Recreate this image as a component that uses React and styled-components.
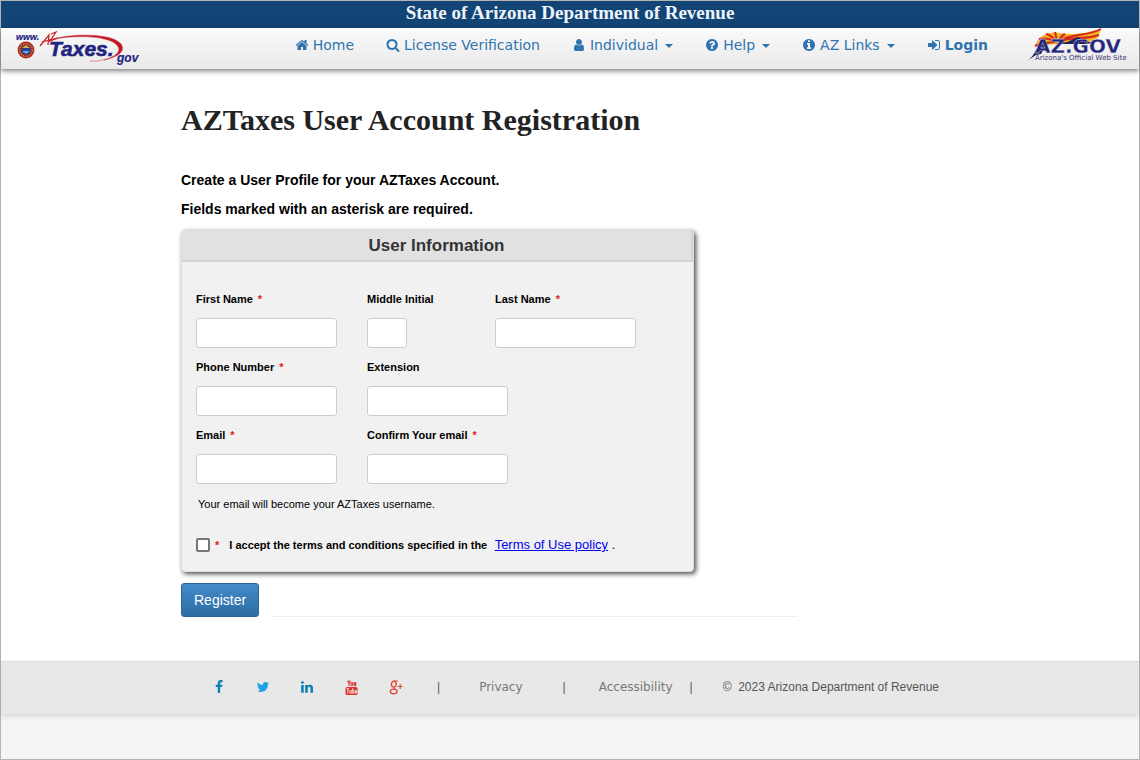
import React from "react";
import styled, { createGlobalStyle } from "styled-components";

const SANS = '"Liberation Sans", Arial, sans-serif';
const WIDE = '"DejaVu Sans", Verdana, sans-serif';
const SERIF = '"Liberation Serif", "Times New Roman", serif';

const GlobalStyle = createGlobalStyle`
  *, *::before, *::after { box-sizing: border-box; }
  body { margin: 0; background: #f4f4f4; font-family: ${SANS}; color: #000; }
`;

const Page = styled.div`
  display: flex;
  flex-direction: column;
  min-height: 100vh;
  border: 1px solid #b4b4b2;
  background: #f4f4f4;
`;

const Banner = styled.div`
  background: #124475;
  color: #edf4fb;
  font: bold 19px/23px ${SERIF};
  padding-bottom: 4px;
  text-align: center;
`;

const NavBar = styled.header`
  display: flex;
  height: 41px;
  background: linear-gradient(#fafafa, #e9e9e9);
  box-shadow: 0 2px 5px rgba(0, 0, 0, 0.5);
  padding: 0 11px 0 13px;
  z-index: 1;
`;

const NavList = styled.nav`
  display: flex;
  gap: 32px;
  margin: 0 39px 0 auto;
`;

const NavLink = styled.a`
  display: flex;
  align-items: center;
  gap: 4px;
  height: 34px;
  color: #2f74ae;
  font: ${(p) => (p.$strong ? "bold" : "normal")} 14px/20px ${WIDE};
  text-decoration: none;
  white-space: nowrap;
`;

const Caret = styled.span`
  margin: 2px 0 0 3px;
  border: 4px solid transparent;
  border-top-color: currentColor;
  border-bottom: 0;
`;

const Main = styled.main`
  background: #fff;
  padding: 31px 180px 44px;
  flex: none;
`;

const Title = styled.h1`
  margin: 0 0 32px;
  color: #222;
  font: bold 30px/40px ${SERIF};
`;

const Intro = styled.p`
  margin: 0 0 13px;
  font: bold 14px/16px ${SANS};
`;

const Panel = styled.section`
  max-width: 513px;
  background: #f1f1f1;
  border: 1px solid #ddd;
  border-radius: 4px;
  box-shadow: 2px 2px 5px rgba(0, 0, 0, 0.7);
  margin-bottom: 11px;
`;

const PanelTitle = styled.h2`
  margin: 0;
  border: 1px solid #d3d3d3;
  border-width: 0 2px 2px 0;
  background: #e1e1e1;
  color: #333;
  font: bold 17px/29px ${SANS};
  text-align: center;
`;

const PanelBody = styled.div`
  padding: 30px 14px 17px;
`;

const FieldRow = styled.div`
  display: grid;
  grid-template-columns: ${(p) => p.$columns};
  column-gap: 30px;
  margin-bottom: 12px;
`;

const Field = styled.label`
  display: flex;
  flex-direction: column;
  gap: 12px;
  font: bold 11px/14px ${SANS};
`;

const Input = styled.input`
  width: ${(p) => (p.$short ? "40px" : "141px")};
  height: 30px;
  border: 1px solid #ccc;
  border-radius: 3px;
  background: #fff;
  padding: 4px 6px;
  font: 13px/20px ${SANS};
`;

const Star = styled.span`
  color: #d22;
  margin-left: 5px;
`;

const Hint = styled.p`
  margin: 0 0 24px 2px;
  font: 11px/16px ${SANS};
`;

const Terms = styled.div`
  display: flex;
  align-items: center;
  font: bold 11px/18px ${SANS};
`;

const CheckBox = styled.input`
  appearance: none;
  width: 14px;
  height: 14px;
  margin: 0;
  border: 2px solid #777;
  border-radius: 2px;
  background: #fff;
  &:checked { background: #2f74ae; }
`;

const TermsText = styled.span`
  margin-left: 10px;
  font: 13px/18px ${SANS};
`;

const TermsLabel = styled.label`
  font: bold 11px/18px ${SANS};
  margin-right: 4px;
`;

const TermsLink = styled.a`
  color: #00e;
`;

const Actions = styled.div`
  display: flex;
  align-items: flex-end;
  gap: 12px;
  max-width: 617px;
`;

const Rule = styled.div`
  flex: 1;
  height: 1px;
  background: #eee;
`;

const Button = styled.button`
  height: 34px;
  padding: 0 12px;
  border: 1px solid #2b669a;
  border-radius: 3px;
  background: linear-gradient(#428bca, #2d6ca2);
  color: #fff;
  font: 14px/20px ${SANS};
`;

const Footer = styled.footer`
  display: flex;
  align-items: center;
  height: 53px;
  border-top: 1px solid #ddd;
  background: #e8e8e8;
  box-shadow: 0 2px 5px rgba(0, 0, 0, 0.12);
  color: #555;
  font: 12px/16px ${SANS};
  padding: 0 0 2px 211px;
`;

const Social = styled.div`
  display: flex;
  gap: 30px;
  margin-right: 33px;
`;

const SocialLink = styled.a`
  display: flex;
  color: ${(p) => p.$color};
`;

const FooterLink = styled.a`
  color: #777;
  font: 12px/16px ${WIDE};
  text-decoration: none;
  margin: 0 ${(p) => p.$right}px 0 ${(p) => p.$left}px;
`;

const Copyright = styled.span`
  margin-left: 30px;
  white-space: pre;
`;

const disc =
  "M1664 896q0 209-103 385.5t-279.5 279.5-385.5 103-385.5-103-279.5-279.5-103-385.5 103-385.5 279.5-279.5 385.5-103 385.5 103 279.5 279.5 103 385.5z";

const paths = {
  home: "M1472 992v480q0 26-19 45t-45 19h-384v-384h-256v384h-384q-26 0-45-19t-19-45v-480q0-1 .5-3t.5-3l575-474 575 474q1 2 1 6zm223-69l-62 74q-8 9-21 11h-3q-13 0-21-7l-692-577-692 577q-12 8-24 7-13-2-21-11l-62-74q-8-10-7-23.5t11-21.5l719-599q32-26 76-26t76 26l244 204v-195q0-14 9-23t23-9h192q14 0 23 9t9 23v408l219 182q10 8 11 21.5t-7 23.5z",
  search: "M1216 832q0-185-131.5-316.5t-316.5-131.5-316.5 131.5-131.5 316.5 131.5 316.5 316.5 131.5 316.5-131.5 131.5-316.5zm512 832q0 52-38 90t-90 38q-54 0-90-38l-343-342q-179 124-399 124-143 0-273.5-55.5t-225-150-150-225-55.5-273.5 55.5-273.5 150-225 225-150 273.5-55.5 273.5 55.5 225 150 150 225 55.5 273.5q0 220-124 399l343 343q37 37 37 90z",
  user: "M1536 1399q0 109-62.5 187t-150.5 78h-854q-88 0-150.5-78t-62.5-187q0-85 8.5-160.5t31.5-152 58.5-131 94-89 134.5-34.5q131 128 313 128t313-128q76 0 134.5 34.5t94 89 58.5 131 31.5 152 8.5 160.5zm-256-887q0 159-112.5 271.5t-271.5 112.5-271.5-112.5-112.5-271.5 112.5-271.5 271.5-112.5 271.5 112.5 112.5 271.5z",
  help: "M1024 1376v-192q0-14-9-23t-23-9h-192q-14 0-23 9t-9 23v192q0 14 9 23t23 9h192q14 0 23-9t9-23zm256-672q0-88-55.5-163t-138.5-116-170-41q-243 0-371 213-15 24 8 42l132 100q7 6 19 6 16 0 25-12 53-68 86-92 34-24 86-24 48 0 85.5 26t37.5 59q0 38-20 61t-68 45q-63 28-115.5 86.5t-52.5 125.5v36q0 14 9 23t23 9h192q14 0 23-9t9-23q0-19 21.5-49.5t54.5-49.5q32-18 49-28.5t46-35 44.5-48 28-60.5 12.5-81z" + disc,
  info: "M1152 1376v-160q0-14-9-23t-23-9h-96v-512q0-14-9-23t-23-9h-320q-14 0-23 9t-9 23v160q0 14 9 23t23 9h96v320h-96q-14 0-23 9t-9 23v160q0 14 9 23t23 9h448q14 0 23-9t9-23zm-128-896v-160q0-14-9-23t-23-9h-192q-14 0-23 9t-9 23v160q0 14 9 23t23 9h192q14 0 23-9t9-23z" + disc,
  login: "M1312 896q0 26-19 45l-544 544q-19 19-45 19t-45-19-19-45v-288h-448q-26 0-45-19t-19-45v-384q0-26 19-45t45-19h448v-288q0-26 19-45t45-19 45 19l544 544q19 19 19 45zm352-352v704q0 119-84.5 203.5t-203.5 84.5h-320q-13 0-22.5-9.5t-9.5-22.5q0-4-1-20t-.5-26.5 3-23.5 10-19.5 20.5-6.5h320q66 0 113-47t47-113v-704q0-66-47-113t-113-47h-312l-11.5-1-11.5-3-8-5.5-7-9-2-13.5q0-4-1-20t-.5-26.5 3-23.5 10-19.5 20.5-6.5h320q119 0 203.5 84.5t84.5 203.5z",
  facebook: "M1343 12v264h-157q-86 0-116 36t-30 108v189h293l-39 296h-254v759h-306v-759h-255v-296h255v-218q0-186 104-288.5t277-102.5q147 0 228 12z",
  twitter: "M1684 408q-67 98-162 167 1 14 1 42 0 130-38 259.5t-115.5 248.5-184.5 210.5-258 146-323 54.5q-271 0-496-145 35 4 78 4 225 0 401-138-105-2-188-64.5t-114-159.5q33 5 61 5 43 0 85-11-112-23-185.5-111.5t-73.5-205.5v-4q68 38 146 41-66-44-105-115t-39-154q0-88 44-163 121 149 294.5 238.5t371.5 99.5q-8-38-8-74 0-134 94.5-228.5t228.5-94.5q140 0 236 102 109-21 205-78-37 115-142 178 93-10 186-50z",
  linkedin: "M477 625v991h-330v-991h330zm21-306q1 73-50.5 122t-135.5 49h-2q-82 0-132-49t-50-122q0-74 51.5-122.5t134.5-48.5 133 48.5 51 122.5zm1166 729v568h-329v-530q0-105-40.5-164.5t-126.5-59.5q-63 0-105.5 34.5t-63.5 85.5q-11 30-11 81v553h-329q2-399 2-647t-1-296l-1-48h329v144h-2q20-32 41-56t56.5-52 87-43.5 114.5-15.5q171 0 275 113.5t104 332.5z",
};

const cutOut = ["help", "info", "search"];

const Icon = ({ name, size = 14 }) => (
  <svg
    width={size}
    height={size}
    viewBox="0 0 1792 1792"
    fill="currentColor"
    fillRule={cutOut.includes(name) ? "evenodd" : "nonzero"}
    aria-hidden="true"
  >
    <path d={paths[name]} />
  </svg>
);

const YouTubeIcon = () => (
  <svg width="15" height="15" viewBox="0 0 15 15" aria-hidden="true">
    <g fill="none" stroke="#d9332e" strokeWidth="1.2">
      <path d="M3.6 0.5L5 3.2V6M6.4 .5L5 3.2" />
      <ellipse cx="7.9" cy="4" rx="0.9" ry="1.5" />
      <path d="M10.2 2v3q.1.9 1.4.2M11.6 2v4" />
    </g>
    <rect x="1.5" y="7" width="12" height="8" rx="1.6" fill="#d9332e" />
    <g fill="none" stroke="#fff" strokeWidth="0.8">
      <path d="M2.5 8.6h2.6M3.8 8.6v5M5.9 10v3q.5.8 1.4 0M7.3 10v3.6M8.7 8.2v5.2M8.7 10.4q1.4-.6 1.4.6v1.6q0 1.2-1.4.4M12.7 12.4q-.2 1.2-1.3.8v-2.4q1-1 1.4 0v1h-1.4" />
    </g>
  </svg>
);

const GooglePlusIcon = () => (
  <svg width="15" height="15" viewBox="0 0 15 15" fill="none" stroke="#dd4b39" aria-hidden="true">
    <ellipse cx="4.8" cy="4.2" rx="2.4" ry="2.9" strokeWidth="1.4" />
    <path d="M9 1H5.2M5.6 7.2c-1 .8-.2 1.3.6 1.9" strokeWidth="1.2" />
    <ellipse cx="4.7" cy="11.4" rx="3.4" ry="2.3" strokeWidth="1.4" />
    <path d="M8.7 6.5h5M11.2 4v5" strokeWidth="1.2" />
  </svg>
);

const TaxesLogo = () => (
  <svg width="128" height="40" viewBox="0 0 128 40" role="img" aria-label="www.AZTaxes.gov" fontFamily="Liberation Sans, Arial" fontWeight="bold" fontStyle="italic">
    <circle cx="12" cy="22" r="8.4" fill="#a32b22" />
    <circle cx="12" cy="22" r="6.4" fill="none" stroke="#d98a3a" strokeWidth="1.4" strokeDasharray="1.2 1.2" />
    <circle cx="12" cy="22" r="5" fill="#2b3f8c" />
    <path d="M8 20l4-3 4 3z" fill="#e9a33a" />
    <path d="M8 23h8l-4 3z" fill="#6fa7d8" />
    <path d="M35 12C58 5 98 5 107 16c5 8-4 13-17 16q14-4 15-10C105 9 68 5 35 12z" fill="#c31722" stroke="#c31722" strokeWidth="0.5" />
    <path d="M76 33q8 1 16-2" fill="none" stroke="#d9747a" strokeWidth="0.8" />
    <text x="2" y="12" fontSize="9" fill="#22257f" stroke="#22257f" strokeWidth="0.2">www.</text>
    <path d="M26 18L35 7l-1 10M28 14l8-2M37 6l5-2-6 9 8-3" fill="none" stroke="#cc1f26" strokeWidth="1.2" />
    <text x="35" y="28" fontSize="21" fill="#22257f" stroke="#22257f" strokeWidth="0.6">Taxes.</text>
    <text x="103" y="34" fontSize="12" fill="#22257f" stroke="#22257f" strokeWidth="0.2">gov</text>
  </svg>
);

const AzGovLogo = () => (
  <svg width="101" height="40" viewBox="0 0 101 40" role="img" aria-label="AZ.GOV Arizona's Official Web Site">
    <path d="M8 18C11 8 22 3 32 5 48 8 62 4 74 1L71 9 67 13 50 14 30 16z" fill="#f6b21c" />
    <g fill="none" stroke="#d3241f" strokeWidth="2">
      <path d="M30 14Q18 14 8 18M30 14Q20 9 12 11M30 14Q24 7 19 6M30 14Q29 8 28 4M31 14Q34 8 38 6M31 14C42 5 60 9 74 1M31 14C46 8 58 12 72 7" />
    </g>
    <circle cx="30" cy="13" r="3" fill="#b9a13c" />
    <path d="M0 33C8 28 8 20 15 15l5 0-6 11-5 1zM34 15l6-1 11-5 5 3 10 3-8 1H36z" fill="#22245c" />
    <text x="8" y="25" fontFamily="DejaVu Sans" fontWeight="bold" fontSize="20" fill="#22257a" stroke="#f0f0f0" strokeWidth="0.3">AZ.GOV</text>
    <text x="8" y="32" fontFamily="DejaVu Sans" fontSize="7" fill="#33366f">Arizona's Official Web Site</text>
  </svg>
);

const navItems = [
  { icon: "home", label: "Home" },
  { icon: "search", label: "License Verification" },
  { icon: "user", label: "Individual", menu: true },
  { icon: "help", label: "Help", menu: true },
  { icon: "info", label: "AZ Links", menu: true },
  { icon: "login", label: "Login", strong: true },
];

const rows = [
  {
    columns: "141px 98px 141px",
    fields: [
      { id: "first", label: "First Name", required: true },
      { id: "middle", label: "Middle Initial", short: true },
      { id: "last", label: "Last Name", required: true },
    ],
  },
  {
    columns: "141px 141px",
    fields: [
      { id: "phone", label: "Phone Number", required: true },
      { id: "extension", label: "Extension" },
    ],
  },
  {
    columns: "141px 141px",
    fields: [
      { id: "email", label: "Email", required: true },
      { id: "confirm", label: "Confirm Your email", required: true },
    ],
  },
];

export default function App() {
  return (
    <>
      <GlobalStyle />
      <Page>
        <Banner>State of Arizona Department of Revenue</Banner>
        <NavBar>
          <TaxesLogo />
          <NavList>
            {navItems.map((item) => (
              <NavLink key={item.label} href="#" $strong={item.strong}>
                <Icon name={item.icon} />
                {item.label}
                {item.menu && <Caret />}
              </NavLink>
            ))}
          </NavList>
          <AzGovLogo />
        </NavBar>
        <Main>
          <Title>AZTaxes User Account Registration</Title>
          <Intro>Create a User Profile for your AZTaxes Account.</Intro>
          <Intro>Fields marked with an asterisk are required.</Intro>
          <Panel>
            <PanelTitle>User Information</PanelTitle>
            <PanelBody>
              {rows.map((row) => (
                <FieldRow key={row.fields[0].id} $columns={row.columns}>
                  {row.fields.map((f) => (
                    <Field key={f.id} htmlFor={f.id}>
                      <span>
                        {f.label}
                        {f.required && <Star>*</Star>}
                      </span>
                      <Input id={f.id} $short={f.short} />
                    </Field>
                  ))}
                </FieldRow>
              ))}
              <Hint>Your email will become your AZTaxes username.</Hint>
              <Terms>
                <CheckBox type="checkbox" id="terms" />
                <Star>*</Star>
                <TermsText>
                  <TermsLabel htmlFor="terms">I accept the terms and conditions specified in the</TermsLabel>{" "}
                  <TermsLink href="#">Terms of Use policy</TermsLink> .
                </TermsText>
              </Terms>
            </PanelBody>
          </Panel>
          <Actions>
            <Button type="button">Register</Button>
            <Rule />
          </Actions>
        </Main>
        <Footer>
          <Social>
            <SocialLink href="#" aria-label="Facebook" $color="#0e7fb8"><Icon name="facebook" /></SocialLink>
            <SocialLink href="#" aria-label="Twitter" $color="#1da1e6"><Icon name="twitter" /></SocialLink>
            <SocialLink href="#" aria-label="LinkedIn" $color="#0e7fb8"><Icon name="linkedin" /></SocialLink>
            <SocialLink href="#" aria-label="YouTube"><YouTubeIcon /></SocialLink>
            <SocialLink href="#" aria-label="Google Plus"><GooglePlusIcon /></SocialLink>
          </Social>
          <span>|</span>
          <FooterLink href="#" $left={39} $right={40}>Privacy</FooterLink>
          <span>|</span>
          <FooterLink href="#" $left={33} $right={17}>Accessibility</FooterLink>
          <span>|</span>
          <Copyright>©  2023 Arizona Department of Revenue</Copyright>
        </Footer>
      </Page>
    </>
  );
}
